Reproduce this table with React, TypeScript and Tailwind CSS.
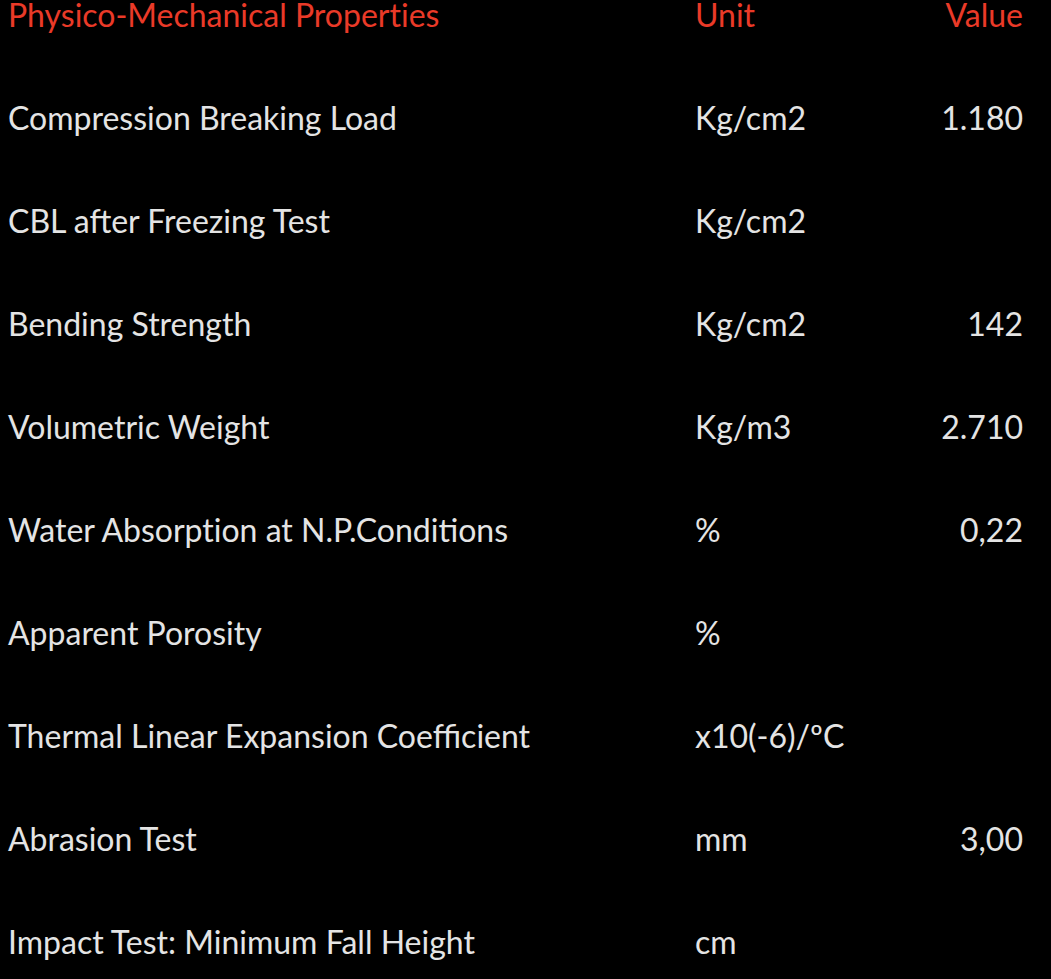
const rows = [
  { name: "Compression Breaking Load", unit: "Kg/cm2", value: "1.180" },
  { name: "CBL after Freezing Test", unit: "Kg/cm2", value: "" },
  { name: "Bending Strength", unit: "Kg/cm2", value: "142" },
  { name: "Volumetric Weight", unit: "Kg/m3", value: "2.710" },
  { name: "Water Absorpt\u200Cion at N.P.Conditions", unit: "%", value: "0,22" },
  { name: "Apparent Porosity", unit: "%", value: "" },
  { name: "Thermal Linear Expansion Coefficient", unit: "x10(-6)/ºC", value: "" },
  { name: "Abrasion Test", unit: "mm", value: "3,00" },
  { name: "Impact Test: Minimum Fall Height", unit: "cm", value: "" },
];

export default function App() {
  return (
    <div className="h-screen overflow-hidden bg-black pl-[8px] pr-[28px] font-['Lato',sans-serif] text-[32px] leading-[30px]">
      <div className="grid h-[103px] grid-cols-[687px_1fr_auto] text-[#ea3a28]">
        <div>Physico-Mechanical Propert{"\u200C"}ies</div>
        <div>Unit</div>
        <div className="text-right">Value</div>
      </div>
      {rows.map((row) => (
        <div key={row.name} className="grid h-[103px] grid-cols-[687px_1fr_auto] text-[#e4e4e4]">
          <div>{row.name}</div>
          <div>{row.unit}</div>
          <div className="text-right">{row.value}</div>
        </div>
      ))}
    </div>
  );
}
